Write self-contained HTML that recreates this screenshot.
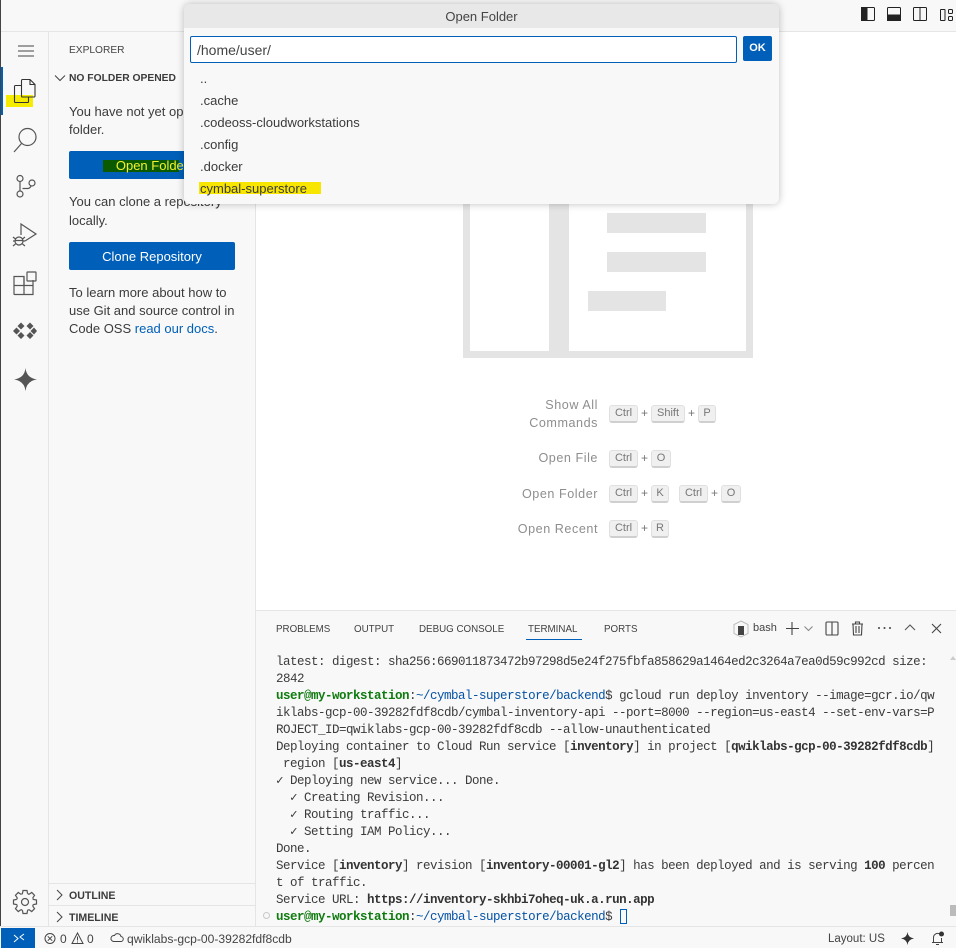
<!DOCTYPE html>
<html><head><meta charset="utf-8"><style>
html,body{margin:0;padding:0;width:956px;height:948px;overflow:hidden;background:#fff}
body{position:relative;font-family:"Liberation Sans",sans-serif;font-size:13px;color:#3b3b3b}
.a,.t{position:absolute}
.t{white-space:nowrap;line-height:18px}
svg{position:absolute;overflow:visible}
.side{font-size:13px;color:#3b3b3b}
.btn{position:absolute;left:69px;width:166px;height:28px;background:#005fb8;border-radius:2px;color:#fff;text-align:center;line-height:29px;font-size:13px}
.q{left:200px;font-size:13px;color:#3b3b3b}
.lbl{font-size:12.6px;color:#8e8e8e;letter-spacing:.55px;text-align:right;right:358px;line-height:18px;white-space:nowrap;position:absolute}
.k{position:absolute;height:15px;line-height:15px;background:#f0f0f0;border:1px solid #e0e0e0;border-bottom:2px solid #cfcfcf;border-radius:3px;font-size:11px;color:#777;text-align:center;box-sizing:content-box}
.p{position:absolute;font-size:12px;color:#777}
.tab{position:absolute;top:621px;font-size:10.4px;line-height:18px;color:#424242;white-space:nowrap;transform:scaleX(.94);transform-origin:left}
#term{position:absolute;left:276px;top:654px;font-family:"Liberation Mono",monospace;font-size:12.5px;letter-spacing:-.5px;line-height:17px;color:#3b3b3b;white-space:pre}
#term b{font-weight:700;color:#333}
.g{color:#0f7b0f;font-weight:700}.bl{color:#0451a5}
</style></head><body>
<div class="a" style="left:0;top:0;width:956px;height:32px;background:#f8f8f8;border-bottom:1px solid #e5e5e5;box-sizing:border-box"></div>
<div class="a" style="left:0;top:32px;width:49px;height:894px;background:#f8f8f8;border-right:1px solid #e5e5e5;box-sizing:border-box"></div>
<div class="a" style="left:49px;top:32px;width:207px;height:894px;background:#f8f8f8;border-right:1px solid #e5e5e5;box-sizing:border-box"></div>
<div class="a" style="left:0;top:0;width:1px;height:948px;background:#444"></div>

<!-- Title bar icons -->
<svg style="left:860px;top:6px" width="96" height="17" fill="none" stroke="#222" stroke-width="1">
<rect x="1.500" y="1.500" width="13" height="13" rx="1"/><rect x="1.500" y="1.500" width="5.500" height="13" fill="#222"/>
<rect x="27.500" y="1.500" width="13" height="13" rx="1"/><rect x="27.500" y="9" width="13" height="5.500" fill="#222"/>
<rect x="53.500" y="1.500" width="13" height="13" rx="1"/><path d="M60 1.500v13"/>
<rect x="80.500" y="3.500" width="4.500" height="11" rx=".5"/><rect x="88.500" y="3.500" width="4" height="4" rx="1"/><rect x="88.500" y="10.500" width="4" height="4" rx="1"/>
</svg>

<!-- Activity bar -->
<div class="a" style="left:1px;top:67px;width:2px;height:48px;background:#005fb8"></div>
<svg style="left:17px;top:44px" width="17" height="14" stroke="#444" stroke-width="1"><path d="M1 2h16M1 7h16M1 12h16"/></svg>
<div class="a" style="left:6px;top:95px;width:27px;height:12px;background:#f5ec00"></div>
<svg style="left:14px;top:79px" width="22" height="25" fill="none" stroke="#333" stroke-width="1.100">
<path d="M7 6.500H1.500a1 1 0 0 0-1 1V22.500a1 1 0 0 0 1 1H13.500a1 1 0 0 0 1-1V18"/>
<path d="M7.500 1.500a1 1 0 0 1 1-1H16l5 5V17a1 1 0 0 1-1 1H8.500a1 1 0 0 1-1-1z"/><path d="M16 .5V5.500h5"/></svg>
<svg style="left:13px;top:127px" width="24" height="26" fill="none" stroke="#555" stroke-width="1.200"><circle cx="14.500" cy="10" r="8.500"/><path d="M8.500 16.500L1 25"/></svg>
<svg style="left:15px;top:174px" width="22" height="26" fill="none" stroke="#555" stroke-width="1.200"><circle cx="5" cy="4.500" r="3"/><circle cx="5" cy="20" r="3"/><circle cx="17" cy="9" r="3"/><path d="M5 7.500V17M7.500 14.500H12.500Q15 14.500 16 12"/></svg>
<svg style="left:12px;top:222px" width="26" height="27" fill="none" stroke="#555" stroke-width="1.200"><path d="M9 13V2l15 10-11 7"/><circle cx="7" cy="19" r="4"/><path d="M1 15l2.500 2M1 19h2M1 24l2.500-2M13 15l-2.500 2M13 19h-2M13 24l-2.500-2M3 18.500h8"/></svg>
<svg style="left:13px;top:271px" width="25" height="25" fill="none" stroke="#555" stroke-width="1.200"><path d="M1 5.500h10v18H1.500a.5.5 0 0 1-.5-.5zM1 14.500h19v9H11"/><path d="M20 14.500V9"/><rect x="14" y="1" width="9" height="9" rx=".5"/><path d="M11 5.500V14.500"/></svg>
<svg style="left:13px;top:322px" width="24" height="18" fill="#555"><path d="M8 .5l3.500 3.500L8 7.500 4.500 4zM17 .5l3.500 3.500L17 7.500 13.500 4zM3.500 5.500L7 9l-3.500 3.500L0 9zM21 5.500L24 9l-3 3.500L17.500 9zM8 10l3.500 3.500L8 17l-3.500-3.500zM17 10l3.500 3.500L17 17l-3.500-3.500z"/></svg>
<svg style="left:14px;top:368px" width="23" height="23" fill="#555"><path d="M11.500 0Q12.500 10 23 11.500 12.500 13 11.500 23 10.500 13 0 11.500 10.500 10 11.500 0z"/></svg>
<svg style="left:13px;top:890px" width="24" height="24" fill="none" stroke="#555" stroke-width="1.200"><g transform="translate(12 12)"><circle r="3.500"/><circle r="8.600" stroke-dasharray="1.550 5.200" stroke-dashoffset="-2.600"/>
<path id="x" d="M-2.600-8.200L-2-11.500H2L2.600-8.200"/><path transform="rotate(45)" d="M-2.600-8.200L-2-11.500H2L2.600-8.200"/><path transform="rotate(90)" d="M-2.600-8.200L-2-11.500H2L2.600-8.200"/><path transform="rotate(135)" d="M-2.600-8.200L-2-11.500H2L2.600-8.200"/><path transform="rotate(180)" d="M-2.600-8.200L-2-11.500H2L2.600-8.200"/><path transform="rotate(225)" d="M-2.600-8.200L-2-11.500H2L2.600-8.200"/><path transform="rotate(270)" d="M-2.600-8.200L-2-11.500H2L2.600-8.200"/><path transform="rotate(315)" d="M-2.600-8.200L-2-11.500H2L2.600-8.200"/></g></svg>

<!-- Sidebar -->
<div class="t" style="left:69px;top:42px;font-size:10.2px;color:#444">EXPLORER</div>
<svg style="left:54px;top:73px" width="12" height="10" fill="none" stroke="#444"><path d="M1 2.500l5 5 5-5"/></svg>
<div class="t" style="left:69px;top:70px;font-size:10.300px;font-weight:700;color:#3b3b3b">NO FOLDER OPENED</div>
<div class="t side" style="left:69px;top:103px;">You have not yet opened a</div>
<div class="t side" style="left:69px;top:121px;">folder.</div>
<div class="btn" style="top:151px"><span style="position:absolute;left:34px;top:9px;width:76px;height:12px;background:#0b5a00"></span><span style="position:relative;color:#f2f230;left:0">Open Folder</span></div>
<div class="t side" style="left:69px;top:193px">You can clone a repository</div>
<div class="t side" style="left:69px;top:212px">locally.</div>
<div class="btn" style="top:242px">Clone Repository</div>
<div class="t side" style="left:69px;top:284px">To learn more about how to</div>
<div class="t side" style="left:69px;top:302px">use Git and source control in</div>
<div class="t side" style="left:69px;top:320px">Code OSS <span style="color:#005fb8">read our docs</span>.</div>
<div class="a" style="left:49px;top:883px;width:206px;height:1px;background:#e5e5e5"></div>
<div class="a" style="left:49px;top:905px;width:206px;height:1px;background:#e5e5e5"></div>
<svg style="left:56px;top:889px" width="8" height="34" fill="none" stroke="#444"><path d="M1 1l5 5-5 5M1 23l5 5-5 5"/></svg>
<div class="t" style="left:69px;top:887px;font-size:10.600px;font-weight:700">OUTLINE</div>
<div class="t" style="left:69px;top:909px;font-size:10.600px;font-weight:700">TIMELINE</div>

<!-- Watermark -->
<div class="a" style="left:463px;top:190px;width:290px;height:168px;background:#e4e4e4"></div>
<div class="a" style="left:470px;top:190px;width:79px;height:161px;background:#fff"></div>
<div class="a" style="left:569px;top:190px;width:177px;height:161px;background:#fff"></div>
<div class="a" style="left:607px;top:213px;width:99px;height:20px;background:#e4e4e4"></div>
<div class="a" style="left:607px;top:252px;width:99px;height:20px;background:#e4e4e4"></div>
<div class="a" style="left:588px;top:291px;width:78px;height:20px;background:#e4e4e4"></div>

<div class="lbl" style="top:396px">Show All</div>
<div class="lbl" style="top:414px">Commands</div>
<div class="lbl" style="top:449px">Open File</div>
<div class="lbl" style="top:485px">Open Folder</div>
<div class="lbl" style="top:520px">Open Recent</div>
<div class="k" style="left:609px;top:405px;width:27px">Ctrl</div><div class="p" style="left:641px;top:406px">+</div>
<div class="k" style="left:651px;top:405px;width:32px">Shift</div><div class="p" style="left:688px;top:406px">+</div>
<div class="k" style="left:698px;top:405px;width:16px">P</div>
<div class="k" style="left:609px;top:450px;width:27px">Ctrl</div><div class="p" style="left:641px;top:451px">+</div>
<div class="k" style="left:651px;top:450px;width:18px">O</div>
<div class="k" style="left:609px;top:485px;width:27px">Ctrl</div><div class="p" style="left:641px;top:486px">+</div>
<div class="k" style="left:651px;top:485px;width:16px">K</div>
<div class="k" style="left:679px;top:485px;width:27px">Ctrl</div><div class="p" style="left:711px;top:486px">+</div>
<div class="k" style="left:721px;top:485px;width:18px">O</div>
<div class="k" style="left:609px;top:520px;width:27px">Ctrl</div><div class="p" style="left:641px;top:521px">+</div>
<div class="k" style="left:651px;top:520px;width:16px">R</div>

<!-- Panel -->
<div class="a" style="left:256px;top:610px;width:700px;height:316px;background:#f8f8f8;border-top:1px solid #e5e5e5;box-sizing:border-box"></div>
<div class="tab" style="left:276px">PROBLEMS</div>
<div class="tab" style="left:354px">OUTPUT</div>
<div class="tab" style="left:419px">DEBUG CONSOLE</div>
<div class="tab" style="left:528px">TERMINAL</div>
<div class="a" style="left:526px;top:639px;width:56px;height:1px;background:#005fb8"></div>
<div class="tab" style="left:604px">PORTS</div>
<svg style="left:732px;top:620px" width="18" height="18" fill="none" stroke="#bbb"><path d="M9 1l7 3.500v9L9 17l-7-3.500v-9z"/><rect x="6" y="6" width="6" height="9" fill="#444" stroke="none"/></svg>
<div class="t" style="left:753px;top:619px;font-size:11px;color:#444">bash</div>
<svg style="left:785px;top:621px" width="30" height="16" fill="none" stroke="#444" stroke-width="1.100"><path d="M7 1v13M1 7.500h13"/><path d="M19.500 5.500l4 4 4-4" stroke="#888"/></svg>
<svg style="left:825px;top:621px" width="15" height="15" fill="none" stroke="#444" stroke-width="1.100"><rect x="1" y="1" width="12" height="13" rx="1"/><path d="M7 1v13"/></svg>
<svg style="left:851px;top:621px" width="13" height="15" fill="none" stroke="#444" stroke-width="1.100"><path d="M1 3h11M4.500 3V1h4v2M2 3l.5 11h8L11 3M5 5v7M8 5v7"/></svg>
<svg style="left:877px;top:626px" width="15" height="4" fill="#444"><circle cx="2" cy="2" r="1"/><circle cx="7.500" cy="2" r="1"/><circle cx="13" cy="2" r="1"/></svg>
<svg style="left:904px;top:623px" width="13" height="9" fill="none" stroke="#555" stroke-width="1.100"><path d="M1 7l5-5 5 5"/></svg>
<svg style="left:931px;top:623px" width="11" height="11" fill="none" stroke="#444" stroke-width="1.100"><path d="M1 1l9 9M10 1l-9 9"/></svg>

<div id="term">latest: digest: sha256:669011873472b97298d5e24f275fbfa858629a1464ed2c3264a7ea0d59c992cd size:
2842
<span class="g">user@my-workstation</span>:<span class="bl">~/cymbal-superstore/backend</span>$ gcloud run deploy inventory --image=gcr.io/qw
iklabs-gcp-00-39282fdf8cdb/cymbal-inventory-api --port=8000 --region=us-east4 --set-env-vars=P
ROJECT_ID=qwiklabs-gcp-00-39282fdf8cdb --allow-unauthenticated
Deploying container to Cloud Run service [<b>inventory</b>] in project [<b>qwiklabs-gcp-00-39282fdf8cdb</b>]
 region [<b>us-east4</b>]
✓ Deploying new service... Done.
  ✓ Creating Revision...
  ✓ Routing traffic...
  ✓ Setting IAM Policy...
Done.
Service [<b>inventory</b>] revision [<b>inventory-00001-gl2</b>] has been deployed and is serving <b>100</b> percen
t of traffic.
Service URL: <b>https://inventory-skhbi7oheq-uk.a.run.app</b>
<span class="g">user@my-workstation</span>:<span class="bl">~/cymbal-superstore/backend</span>$ </div>
<div class="a" style="left:620px;top:909px;width:7px;height:15px;border:1px solid #005fb8;box-sizing:border-box"></div>
<div class="a" style="left:263px;top:912px;width:7px;height:7px;border:1px solid #c8c8c8;border-radius:50%;box-sizing:border-box"></div>
<div class="a" style="left:950px;top:905px;width:6px;height:11px;background:#bbb"></div>
<svg style="left:950px;top:656px" width="6" height="4" fill="#ccc"><path d="M3 0l3 4H0z"/></svg>

<!-- Status bar -->
<div class="a" style="left:0;top:926px;width:956px;height:22px;background:#f8f8f8;border-top:1px solid #e5e5e5;box-sizing:border-box"></div>
<div class="a" style="left:1px;top:928px;width:34px;height:20px;background:#005fb8"></div>
<svg style="left:13px;top:933px" width="12" height="11" fill="none" stroke="#fff"><path d="M1 9l4-3.500L1 2M11 1L7 4l4 3"/></svg>
<svg style="left:44px;top:932px" width="13" height="13" fill="none" stroke="#444"><circle cx="6" cy="6.500" r="5"/><path d="M3.800 4.300l4.400 4.400M8.200 4.300L3.800 8.700"/></svg>
<div class="t" style="left:60px;top:930px;font-size:12px;color:#444">0</div>
<svg style="left:71px;top:932px" width="13" height="13" fill="none" stroke="#444"><path d="M6.500 1L12 11.500H1zM6.500 4.500v4M6.500 9.500v1"/></svg>
<div class="t" style="left:87px;top:930px;font-size:12px;color:#444">0</div>
<svg style="left:110px;top:933px" width="14" height="10" fill="none" stroke="#444"><path d="M3.500 8.500h7a2.500 2.500 0 0 0 .5-5 3.500 3.500 0 0 0-6.500-1A3 3 0 0 0 3.500 8.500z"/></svg>
<div class="t" style="left:127px;top:930px;font-size:12.100px;color:#444">qwiklabs-gcp-00-39282fdf8cdb</div>
<div class="t" style="left:828px;top:930px;font-size:11.500px;color:#444">Layout: US</div>
<svg style="left:901px;top:932px" width="13" height="13" fill="#333"><path d="M6.500 0Q7 5.500 13 6.500 7 7.500 6.500 13 6 7.500 0 6.500 6 5.500 6.500 0z"/></svg>
<svg style="left:931px;top:931px" width="14" height="15" fill="none" stroke="#444"><path d="M2.500 11V6.500a4 4 0 0 1 6-3.500M10.500 7v4M1 11.500h11M5 13.500h3"/><circle cx="10.500" cy="3" r="2.500" fill="#333" stroke="none"/></svg>

<!-- Quick input -->
<div class="a" style="left:184px;top:4px;width:595px;height:200px;background:#f8f8f8;border-radius:6px;box-shadow:0 0 8px rgba(0,0,0,.25)"></div>
<div class="a" style="left:184px;top:4px;width:595px;height:24px;background:#e8e8e8;border-radius:6px 6px 0 0;text-align:center;line-height:26px;font-size:13px;color:#444">Open Folder</div>
<div class="a" style="left:190px;top:36px;width:547px;height:27px;background:#fff;border:1px solid #005fb8;border-radius:2px;box-sizing:border-box;line-height:26px;padding-left:6px;font-size:14px;color:#444">/home/user/</div>
<div class="a" style="left:743px;top:36px;width:29px;height:25px;background:#005fb8;border-radius:2px;color:#fff;font-size:11px;font-weight:700;text-align:center;line-height:25px">OK</div>
<div class="t q" style="top:70px">..</div>
<div class="t q" style="top:92px">.cache</div>
<div class="t q" style="top:114px">.codeoss-cloudworkstations</div>
<div class="t q" style="top:136px">.config</div>
<div class="t q" style="top:158px">.docker</div>
<div class="a" style="left:199px;top:182px;width:122px;height:12px;background:#f8e600"></div>
<div class="t q" style="top:180px">cymbal-superstore</div>
</body></html>
